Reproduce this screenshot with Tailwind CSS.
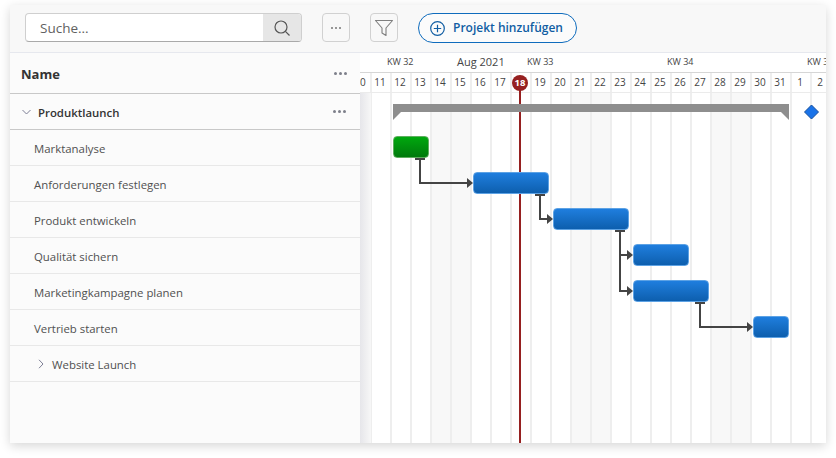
<!DOCTYPE html>
<html><head><meta charset="utf-8"><script src="https://cdn.jsdelivr.net/npm/@tailwindcss/browser@4"></script></head>
<body class="bg-white w-[836px] h-[458px] overflow-hidden font-['Open_Sans',sans-serif] text-[#424242]">
<div class="mt-[5px] ml-[10px] w-[816px] h-[438px] flex flex-col bg-[#f8f8f8] shadow-[0_3px_10px_rgba(0,0,0,0.16)]">
  <div class="h-[48px] shrink-0 flex items-start pt-[8px] pl-[15px] border-b border-[#e6e8ee]">
    <div class="w-[277px] h-[29px] flex rounded-[4px] border border-[#cfcfcf] border-b-[#a9a9a9] bg-white overflow-hidden">
      <span class="flex-1 pl-[14px] text-[13.5px] leading-[29px] text-[#616161]">Suche...</span>
      <span class="w-[38px] bg-[#e6e6e6] flex items-center justify-center">
        <svg width="18" height="18" viewBox="0 0 18 18" fill="none" stroke="#555" stroke-width="1.2"><circle cx="8" cy="8" r="6"/><path d="M12.4 12.4 16.5 16.5"/></svg>
      </span>
    </div>
    <div class="ml-[20px] w-[28px] h-[29px] rounded-[4px] border border-[#d1d1d1] flex items-center justify-center gap-[2px]">
      <span class="w-[2px] h-[2px] rounded-full bg-[#777]"></span><span class="w-[2px] h-[2px] rounded-full bg-[#777]"></span><span class="w-[2px] h-[2px] rounded-full bg-[#777]"></span>
    </div>
    <div class="ml-[20px] w-[28px] h-[29px] rounded-[4px] border border-[#d1d1d1] flex items-center justify-center">
      <svg width="20" height="20" viewBox="0 0 20 20" fill="none" stroke="#7f7f7f" stroke-width="1.1"><path d="M1.5 2.5h17L12 10v7.5l-4-2.5v-5z" stroke-linejoin="round"/></svg>
    </div>
    <div class="ml-[20px] w-[159px] h-[30px] rounded-full border border-[#0f6cbd] flex items-center pl-[11px] gap-[8px] bg-white/40">
      <svg width="15" height="15" viewBox="0 0 15 15" fill="none" stroke="#115ea3" stroke-width="1.2"><circle cx="7.5" cy="7.5" r="6.8"/><path d="M7.5 3.8v7.4M3.8 7.5h7.4"/></svg>
      <span class="text-[12px] font-semibold text-[#115ea3] whitespace-nowrap">Projekt hinzufügen</span>
    </div>
  </div>
  <div class="flex-1 flex min-h-0">
    <div class="w-[350px] shrink-0 bg-[#fbfbfb] flex flex-col text-[11.4px] text-[#505050]">
      <div class="h-[41px] shrink-0 flex items-center justify-between pl-[11px] pr-[13px] border-b border-[#c8c8c8]">
        <span class="text-[13px] font-bold text-[#333] pt-[3px]">Name</span>
        <span class="flex gap-[2px]"><i class="w-[3px] h-[3px] rounded-full bg-[#7d7f8a]"></i><i class="w-[3px] h-[3px] rounded-full bg-[#7d7f8a]"></i><i class="w-[3px] h-[3px] rounded-full bg-[#7d7f8a]"></i></span>
      </div>
      <div class="h-[36px] shrink-0 flex items-center pl-[12px] pr-[14px] border-b border-[#c8c8c8]">
        <svg width="9" height="6" viewBox="0 0 9 6" fill="none" stroke="#7d7f95" stroke-width="1"><path d="M.5 1 4.5 5 8.5 1"/></svg>
        <span class="ml-[7px] font-semibold text-[#333] pt-[2px]">Produktlaunch</span>
        <span class="ml-auto flex gap-[2px]"><i class="w-[3px] h-[3px] rounded-full bg-[#7d7f8a]"></i><i class="w-[3px] h-[3px] rounded-full bg-[#7d7f8a]"></i><i class="w-[3px] h-[3px] rounded-full bg-[#7d7f8a]"></i></span>
      </div>
      <div class="h-[36px] shrink-0 flex items-center pl-[24px] pt-[2px] border-b border-[#e8e8e8]">Marktanalyse</div>
      <div class="h-[36px] shrink-0 flex items-center pl-[24px] pt-[2px] border-b border-[#e8e8e8]">Anforderungen festlegen</div>
      <div class="h-[36px] shrink-0 flex items-center pl-[24px] pt-[2px] border-b border-[#e8e8e8]">Produkt entwickeln</div>
      <div class="h-[36px] shrink-0 flex items-center pl-[24px] pt-[2px] border-b border-[#e8e8e8]">Qualität sichern</div>
      <div class="h-[36px] shrink-0 flex items-center pl-[24px] pt-[2px] border-b border-[#e8e8e8]">Marketingkampagne planen</div>
      <div class="h-[36px] shrink-0 flex items-center pl-[24px] pt-[2px] border-b border-[#e8e8e8]">Vertrieb starten</div>
      <div class="h-[36px] shrink-0 flex items-center pl-[28px] border-b border-[#e8e8e8]">
        <svg width="6" height="10" viewBox="0 0 6 10" fill="none" stroke="#7d7f95" stroke-width="1"><path d="M1 .8 5 5 1 9.2"/></svg>
        <span class="ml-[8px] pt-[2px]">Website Launch</span>
      </div>
    </div>
    <div class="relative flex-1 bg-white overflow-hidden">
      <div class="flex flex-col absolute inset-0 text-[10px] text-[#444]">
        <div class="relative h-[20px] shrink-0 border-b border-[#d6d6d6]">
          <span class="absolute left-[27px] top-[2px] text-[9px]">KW 32</span>
          <span class="absolute left-[97px] top-[1px] text-[11px]">Aug 2021</span>
          <span class="absolute left-[167px] top-[2px] text-[9px]">KW 33</span>
          <span class="absolute left-[307px] top-[2px] text-[9px]">KW 34</span>
          <span class="absolute left-[447px] top-[2px] text-[9px] whitespace-nowrap">KW 35</span>
        </div>
        <div class="flex h-[20px] shrink-0 ml-[-8px] border-b border-[#ebebeb] leading-[19px] text-center [&>span]:pr-[2px]">
          <span class="w-[20px] shrink-0 border-r-2 border-[#eeeeee]">10</span><span class="w-[20px] shrink-0 border-r-2 border-[#eeeeee]">11</span><span class="w-[20px] shrink-0 border-r-2 border-[#eeeeee]">12</span><span class="w-[20px] shrink-0 border-r-2 border-[#eeeeee]">13</span><span class="w-[20px] shrink-0 border-r-2 border-[#eeeeee]">14</span><span class="w-[20px] shrink-0 border-r-2 border-[#eeeeee]">15</span><span class="w-[20px] shrink-0 border-r-2 border-[#eeeeee]">16</span><span class="w-[20px] shrink-0 border-r-2 border-[#eeeeee]">17</span><span class="w-[20px] shrink-0 border-r-2 border-[#eeeeee]">18</span><span class="w-[20px] shrink-0 border-r-2 border-[#eeeeee]">19</span><span class="w-[20px] shrink-0 border-r-2 border-[#eeeeee]">20</span><span class="w-[20px] shrink-0 border-r-2 border-[#eeeeee]">21</span><span class="w-[20px] shrink-0 border-r-2 border-[#eeeeee]">22</span><span class="w-[20px] shrink-0 border-r-2 border-[#eeeeee]">23</span><span class="w-[20px] shrink-0 border-r-2 border-[#eeeeee]">24</span><span class="w-[20px] shrink-0 border-r-2 border-[#eeeeee]">25</span><span class="w-[20px] shrink-0 border-r-2 border-[#eeeeee]">26</span><span class="w-[20px] shrink-0 border-r-2 border-[#eeeeee]">27</span><span class="w-[20px] shrink-0 border-r-2 border-[#eeeeee]">28</span><span class="w-[20px] shrink-0 border-r-2 border-[#eeeeee]">29</span><span class="w-[20px] shrink-0 border-r-2 border-[#eeeeee]">30</span><span class="w-[20px] shrink-0 border-r-2 border-[#eeeeee]">31</span><span class="w-[20px] shrink-0 border-r-2 border-[#eeeeee]">1</span><span class="w-[20px] shrink-0 border-r-2 border-[#eeeeee]">2</span>
        </div>
        <div class="flex flex-1 ml-[-8px]">
          <i class="w-[20px] shrink-0 border-r-2 border-[#eeeeee]"></i><i class="w-[20px] shrink-0 border-r-2 border-[#eeeeee]"></i><i class="w-[20px] shrink-0 border-r-2 border-[#eeeeee]"></i><i class="w-[20px] shrink-0 border-r-2 border-[#eeeeee]"></i>
          <i class="w-[20px] shrink-0 border-r-2 border-[#eeeeee] bg-[#f8f8f8]"></i><i class="w-[20px] shrink-0 border-r-2 border-[#eeeeee] bg-[#f8f8f8]"></i>
          <i class="w-[20px] shrink-0 border-r-2 border-[#eeeeee]"></i><i class="w-[20px] shrink-0 border-r-2 border-[#eeeeee]"></i><i class="w-[20px] shrink-0 border-r-2 border-[#eeeeee]"></i><i class="w-[20px] shrink-0 border-r-2 border-[#eeeeee]"></i><i class="w-[20px] shrink-0 border-r-2 border-[#eeeeee]"></i>
          <i class="w-[20px] shrink-0 border-r-2 border-[#eeeeee] bg-[#f8f8f8]"></i><i class="w-[20px] shrink-0 border-r-2 border-[#eeeeee] bg-[#f8f8f8]"></i>
          <i class="w-[20px] shrink-0 border-r-2 border-[#eeeeee]"></i><i class="w-[20px] shrink-0 border-r-2 border-[#eeeeee]"></i><i class="w-[20px] shrink-0 border-r-2 border-[#eeeeee]"></i><i class="w-[20px] shrink-0 border-r-2 border-[#eeeeee]"></i><i class="w-[20px] shrink-0 border-r-2 border-[#eeeeee]"></i>
          <i class="w-[20px] shrink-0 border-r-2 border-[#eeeeee] bg-[#f8f8f8]"></i><i class="w-[20px] shrink-0 border-r-2 border-[#eeeeee] bg-[#f8f8f8]"></i>
          <i class="w-[20px] shrink-0 border-r-2 border-[#eeeeee]"></i><i class="w-[20px] shrink-0 border-r-2 border-[#eeeeee]"></i><i class="w-[20px] shrink-0 border-r-2 border-[#eeeeee]"></i><i class="w-[20px] shrink-0 border-r-2 border-[#eeeeee]"></i><i class="w-[20px] shrink-0"></i>
        </div>
      </div>
      <div class="absolute left-0 top-[40px] bottom-0 w-[11px] bg-gradient-to-r from-[#e6e6ea] to-[#f7f7f7]"></div>
      <div class="absolute left-[159px] top-[30px] bottom-0 w-[2px] bg-[#962020]"></div>
      <div class="absolute left-[152px] top-[22px] w-[16px] h-[16px] rounded-full bg-[#962020] text-white text-[9.5px] font-bold leading-[16px] text-center">18</div>
      <svg class="absolute left-0 top-0" width="466" height="390" viewBox="0 0 466 390" fill="none">
        <path d="M33 51H429V67L421 59H41L33 67Z" fill="#8e8e8e"/>
        <path d="M451.5 52 458.5 59 451.5 66 444.5 59Z" fill="#1a73e8" stroke="#174f9c"/>
        <g stroke="#444" stroke-width="2">
          <path d="M55 106H65M60 106V130H107M175 142H185M180 142V166H187M255 178H265M260 178V238H267M260 202H267M335 250H345M340 250V274H387"/>
        </g>
        <g fill="#444">
          <path d="M113 130 107 125V135Z"/><path d="M193 166 187 161V171Z"/><path d="M273 202 267 197V207Z"/><path d="M273 238 267 233V243Z"/><path d="M393 274 387 269V279Z"/>
        </g>
      </svg>
      <div class="absolute left-[33px] top-[83px] w-[36px] h-[22px] rounded-[4px] border border-[#5fae5f] bg-gradient-to-b from-[#00a80e] to-[#007a0c]"></div>
      <div class="absolute left-[113px] top-[119px] w-[76px] h-[22px] rounded-[4px] border border-[#5da2e4] bg-gradient-to-b from-[#1f7ede] to-[#0d5fae]"></div>
      <div class="absolute left-[193px] top-[155px] w-[76px] h-[22px] rounded-[4px] border border-[#5da2e4] bg-gradient-to-b from-[#1f7ede] to-[#0d5fae]"></div>
      <div class="absolute left-[273px] top-[191px] w-[56px] h-[22px] rounded-[4px] border border-[#5da2e4] bg-gradient-to-b from-[#1f7ede] to-[#0d5fae]"></div>
      <div class="absolute left-[273px] top-[227px] w-[76px] h-[22px] rounded-[4px] border border-[#5da2e4] bg-gradient-to-b from-[#1f7ede] to-[#0d5fae]"></div>
      <div class="absolute left-[393px] top-[263px] w-[36px] h-[22px] rounded-[4px] border border-[#5da2e4] bg-gradient-to-b from-[#1f7ede] to-[#0d5fae]"></div>
    </div>
  </div>
</div>
</body></html>
